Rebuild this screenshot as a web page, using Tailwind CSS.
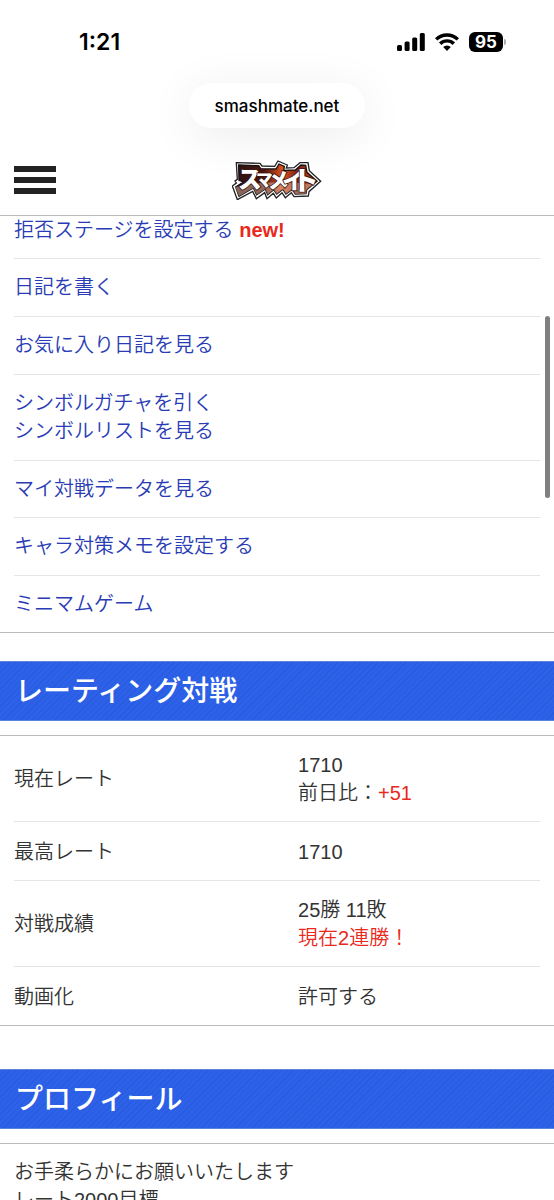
<!DOCTYPE html>
<html lang="ja">
<head>
<meta charset="utf-8">
<meta name="viewport" content="width=device-width, initial-scale=1">
<title>スマメイト</title>
<script src="https://cdn.jsdelivr.net/npm/@tailwindcss/browser@4"></script>
</head>
<body class="h-screen overflow-hidden bg-white font-['Liberation_Sans','Noto_Sans_CJK_JP',sans-serif] text-[20px] leading-[28px] font-[350] text-[#333333]">
<div class="relative h-full overflow-hidden">
  <header class="border-b border-[#bbbbbb]">
    <div class="flex items-center justify-between pt-7 pr-[48px] pl-[79px] font-['Inter',sans-serif] text-black">
      <time class="text-[23px] font-semibold">1:21</time>
      <div class="flex items-center gap-[10px]">
        <svg class="h-[18px] w-[28px]" viewBox="0 0 28 18" aria-hidden="true"><rect x="0" y="12" width="5" height="6" rx="1.5"/><rect x="7.600" y="8.500" width="5" height="9.500" rx="1.500"/><rect x="15.200" y="4.500" width="5" height="13.500" rx="1.500"/><rect x="22.800" y="0" width="5" height="18" rx="1.500"/></svg>
        <svg class="h-[18px] w-[24px]" viewBox="0 0 24 18" fill="none" stroke="#000" stroke-width="3.400" aria-hidden="true"><path d="M1.200 6.400A15.400 15.400 0 0 1 22.800 6.400"/><path d="M5.200 10.700A9.600 9.600 0 0 1 18.800 10.700"/><path d="M12 18L8.200 14.100A5.400 5.400 0 0 1 15.800 14.100Z" fill="#000" stroke="none"/></svg>
        <div class="flex items-center gap-px">
          <span class="flex h-5 w-[34px] items-center justify-center rounded-md bg-black text-[17px] font-bold text-white">95</span>
          <span class="h-[6px] w-[2px] rounded-r-full bg-[#aaaaaa]"></span>
        </div>
      </div>
    </div>
    <div class="mt-[27px] flex justify-center">
      <div class="rounded-full bg-white px-[26px] pt-[9px] pb-[7px] font-['Inter',sans-serif] text-[17px] leading-[29px] font-medium text-black shadow-[0_8px_48px_rgba(0,0,0,0.08)]">smashmate.net</div>
    </div>
    <div class="grid grid-cols-[1fr_auto_1fr] items-center px-[14px] pt-[32px] pb-[15px]">
      <button type="button" aria-label="メニュー" class="flex w-[42px] flex-col gap-[5px]"><span class="h-[6px] w-full bg-[#222222]"></span><span class="h-[6px] w-full bg-[#222222]"></span><span class="h-[6px] w-full bg-[#222222]"></span></button>
      <a href="#" aria-label="スマメイト">
        <svg class="h-[40px] w-[90px]" viewBox="36 30 270 120">
          <defs>
            <linearGradient id="ember" x1="0" x2="1"><stop offset="0" stop-color="#2b1212"/><stop offset=".35" stop-color="#4a1510"/><stop offset=".58" stop-color="#e2541b"/><stop offset=".75" stop-color="#7a2414"/><stop offset="1" stop-color="#c2441c"/></linearGradient>
          </defs>
          <path d="M49 38L120 40L126 48L164 49L174 33L202 45L199 54L222 53L240 38L264 38L268 62L302 94L267 125L265 138L222 140L214 128L196 143L186 128L169 144L160 130L141 146L134 128L109 146L98 124L52 149L37 108L49 99L45 93L52 88Z" fill="#fff" stroke="#222" stroke-width="4"/>
          <path d="M56 45L116 47L122 56L168 57L177 42L193 49L191 61L226 60L243 45L257 46L261 67L291 94L260 119L258 131L226 132L217 118L198 132L189 118L170 132L161 119L143 134L136 117L110 134L100 114L57 139L47 111L70 96L57 91Z" fill="url(#ember)" stroke="#1a1010" stroke-width="4"/>
          <path d="M46 111Q145 87 280 103L260 119L258 131L226 132L217 118L198 132L189 118L170 132L161 119L143 134L136 117L110 134L100 114L57 139Z" fill="#dfb7a6" opacity=".5"/>
          <g fill="#fff" stroke="#3a1510" stroke-width="5" paint-order="stroke" font-family="'Noto Sans CJK JP',sans-serif" font-weight="900">
            <text x="53" y="113" font-size="72">ス</text>
            <text x="108" y="109" font-size="50">マ</text>
            <text x="143" y="114" font-size="64">メ</text>
            <text x="187" y="116" font-size="66">イ</text>
            <text x="215" y="119" font-size="80">ト</text>
          </g>
        </svg>
      </a>
    </div>
  </header>

  <main>
    <ul class="border-b border-[#bbbbbb] px-[14px] text-[#2a3cb5]">
      <li class="border-b border-[#e5e5e5] pb-[14px]"><a href="#">拒否ステージを設定する</a> <strong class="font-bold text-[#e8291c]">new!</strong></li>
      <li class="border-b border-[#e5e5e5] pt-[14px] pb-[15px]"><a href="#">日記を書く</a></li>
      <li class="border-b border-[#e5e5e5] pt-[14px] pb-[15px]"><a href="#">お気に入り日記を見る</a></li>
      <li class="border-b border-[#e5e5e5] pt-[14px] pb-[15px]"><a href="#">シンボルガチャを引く</a><br><a href="#">シンボルリストを見る</a></li>
      <li class="border-b border-[#e5e5e5] py-[14px]"><a href="#">マイ対戦データを見る</a></li>
      <li class="border-b border-[#e5e5e5] pt-[14px] pb-[15px]"><a href="#">キャラ対策メモを設定する</a></li>
      <li class="py-[14px]"><a href="#">ミニマムゲーム</a></li>
    </ul>

    <h2 class="mt-7 border-y border-[#5b83dc] bg-[#2d62e8] bg-[repeating-linear-gradient(135deg,transparent_0_3px,rgba(20,60,190,0.18)_3px_4px)] px-[15px] pt-[9px] pb-[7px] text-[28px] leading-[42px] font-medium text-white">レーティング対戦</h2>
    <div class="mt-[14px] border-y border-[#bbbbbb] px-[14px]">
      <table class="w-full table-fixed border-collapse text-left">
        <tbody>
          <tr class="border-b border-[#e5e5e5]"><th scope="row" class="w-[54%] pt-[15px] pb-[14px] font-[350]">現在レート</th><td class="pt-[15px] pb-[14px]">1710<br>前日比：<span class="text-[#e8291c]">+51</span></td></tr>
          <tr class="border-b border-[#e5e5e5]"><th scope="row" class="pt-4 pb-[14px] font-[350]">最高レート</th><td class="pt-4 pb-[14px]">1710</td></tr>
          <tr class="border-b border-[#e5e5e5]"><th scope="row" class="pt-[15px] pb-[14px] font-[350]">対戦成績</th><td class="pt-[15px] pb-[14px]">25勝 11敗<br><span class="text-[#e8291c]">現在2連勝！</span></td></tr>
          <tr><th scope="row" class="pt-4 pb-[14px] font-[350]">動画化</th><td class="pt-4 pb-[14px]">許可する</td></tr>
        </tbody>
      </table>
    </div>

    <h2 class="mt-[43px] border-y border-[#5b83dc] bg-[#2d62e8] bg-[repeating-linear-gradient(135deg,transparent_0_3px,rgba(20,60,190,0.18)_3px_4px)] px-[15px] pt-[9px] pb-[7px] text-[28px] leading-[42px] font-medium text-white">プロフィール</h2>
    <p class="mt-[14px] border-t border-[#bbbbbb] px-[14px] pt-[14px]">お手柔らかにお願いいたします<br>レート2000目標</p>
  </main>

  <div class="absolute top-[316px] right-[4px] h-[182px] w-[5px] rounded-full bg-[#7f7f7f]" aria-hidden="true"></div>
</div>
</body>
</html>
